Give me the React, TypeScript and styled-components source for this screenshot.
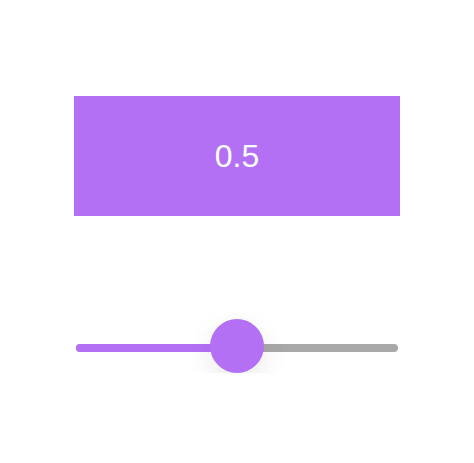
import React, { useRef, useState } from 'react';
import styled, { createGlobalStyle } from 'styled-components';

const GlobalStyle = createGlobalStyle`
  html, body {
    margin: 0;
    padding: 0;
    background: #ffffff;
    font-family: 'Liberation Sans', Arial, sans-serif;
  }
`;

const PURPLE = '#b370f5';

const Page = styled.div`
  display: flex;
  flex-direction: column;
  align-items: center;
  padding-top: 96px;
  width: 474px;
`;

const ValueBox = styled.div`
  width: 326px;
  height: 120px;
  background: ${PURPLE};
  color: #ffffff;
  display: flex;
  align-items: center;
  justify-content: center;
  font-size: 32px;
  line-height: 1;
`;

const SliderRoot = styled.div`
  position: relative;
  width: 322px;
  height: 54px;
  margin-top: 103px;
  cursor: pointer;
`;

const Track = styled.div`
  position: absolute;
  left: 0;
  right: 0;
  top: 25px;
  height: 8px;
  border-radius: 4px;
  background: #a8a8a8;
  overflow: hidden;
`;

const Fill = styled.div`
  height: 100%;
  background: ${PURPLE};
`;

const Thumb = styled.div`
  position: absolute;
  top: 0;
  width: 54px;
  height: 54px;
  margin-left: -27px;
  border-radius: 50%;
  background: ${PURPLE};
  box-shadow: 0 10px 28px rgba(0, 0, 0, 0.09);
`;

export default function App() {
  const [value, setValue] = useState(0.5);
  const ref = useRef<HTMLDivElement>(null);

  const update = (clientX: number) => {
    const el = ref.current;
    if (!el) return;
    const r = el.getBoundingClientRect();
    const v = Math.min(1, Math.max(0, (clientX - r.left) / r.width));
    setValue(Math.round(v * 10) / 10);
  };

  return (
    <>
      <GlobalStyle />
      <Page>
        <ValueBox>{value.toFixed(1)}</ValueBox>
        <SliderRoot
          ref={ref}
          onPointerDown={(e) => {
            (e.target as HTMLElement).setPointerCapture(e.pointerId);
            update(e.clientX);
          }}
          onPointerMove={(e) => {
            if (e.buttons) update(e.clientX);
          }}
        >
          <Track>
            <Fill style={{ width: `${value * 100}%` }} />
          </Track>
          <Thumb style={{ left: `${value * 100}%` }} />
        </SliderRoot>
      </Page>
    </>
  );
}
